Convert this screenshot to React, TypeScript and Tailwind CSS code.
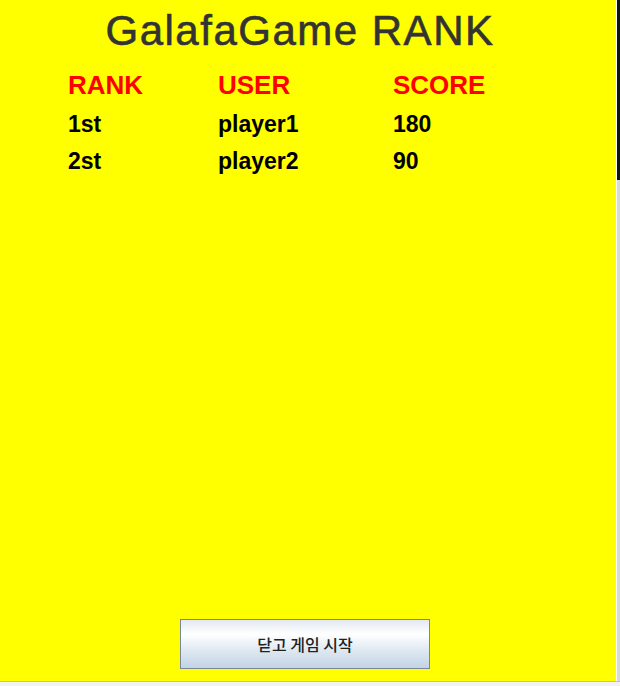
const rows = [
  { rank: "1st", user: "player1", score: "180" },
  { rank: "2st", user: "player2", score: "90" },
];

export default function App() {
  return (
    <div className="flex h-[686px] w-[620px] flex-col overflow-hidden bg-[#ececec]">
      <div className="flex h-[681px]">
        {/* ranking window */}
        <div
          className="flex h-full w-[616px] flex-col bg-[#ffff00] pt-[10px]"
          style={{ fontFamily: '"Liberation Sans", Arial, sans-serif' }}
        >
          <h1 className="w-[600px] text-center text-[42px] font-normal leading-none tracking-[1.5px] text-[#333333] [-webkit-text-stroke:0.6px_#333333]">
            GalafaGame RANK
          </h1>

          <div className="mt-[20px] grid grid-cols-[150px_175px_1fr] pl-[68px] text-[26px] font-bold leading-none text-[#ff0000]">
            <span>RANK</span>
            <span>USER</span>
            <span>SCORE</span>
          </div>

          <div className="mt-[8px] flex flex-col pl-[68px]">
            {rows.map((r) => (
              <div
                key={r.rank}
                className="grid grid-cols-[150px_175px_1fr] text-[23px] font-bold leading-[37px] text-black"
              >
                <span>{r.rank}</span>
                <span>{r.user}</span>
                <span>{r.score}</span>
              </div>
            ))}
          </div>

          <div className="flex-1" />

          <div className="mb-[12px] pl-[180px]">
            <button
              type="button"
              className="flex h-[50px] w-[250px] items-center justify-center border border-[#7a8896] bg-[linear-gradient(to_bottom,#e2e9f1_0%,#ffffff_30%,#dde7f1_65%,#c3d4e6_100%)] text-[16px] font-medium text-[#222222]"
              style={{ fontFamily: '"Noto Sans CJK KR", "Noto Sans", sans-serif' }}
            >
              닫고 게임 시작
            </button>
          </div>
        </div>

        {/* edge of the window behind */}
        <div className="flex w-[4px] flex-col border-l border-white">
          <div className="h-[180px] bg-[#111111]" />
          <div className="flex-1 bg-[#d9d9d9]" />
        </div>
      </div>
      <div className="h-[5px] border-t border-[#bdbdbd] bg-[#f2f2f2]" />
    </div>
  );
}
